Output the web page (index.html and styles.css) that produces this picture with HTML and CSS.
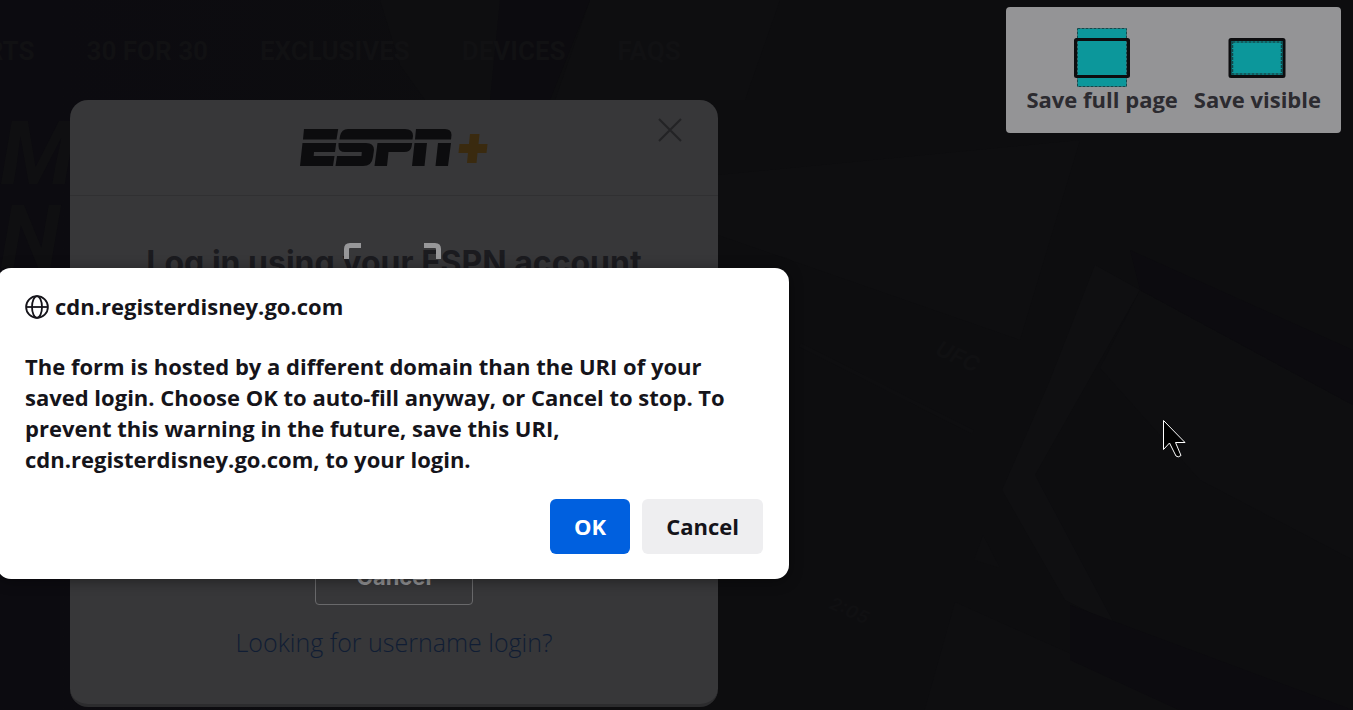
FILE: index.html
```html
<!DOCTYPE html>
<html lang="en">
<head>
<meta charset="utf-8">
<title>ESPN+ Log in</title>
<link rel="stylesheet" href="styles.css">
</head>
<body>
<div class="page">
  <svg class="art" viewBox="0 0 1353 710" preserveAspectRatio="xMinYMin slice" aria-hidden="true">
    <g fill="#0e0e10">
      <path d="M380 0H530L490 100H425L400 65Z"/>
      <path d="M590 0H780L745 100H555Z"/>
      <path d="M718 175L1080 140L1020 340L718 235Z"/>
      <path d="M1140 290L1353 405V560L1200 480L1100 368Z"/>
      <path d="M983 535L1000 568L974 560Z"/>
      <path d="M955 602L1353 780H905Z"/>
    </g>
    <path d="M1095 265L1140 290L1035 475L1115 625L1065 600L1002 490L1048 385Z" fill="#0f0f11"/>
    <g fill="#0c0b0f">
      <path d="M500 0H590L550 100H490Z"/>
      <path d="M1130 250L1353 350V405L1140 290Z"/>
      <path d="M1070 605L1353 710V790L1070 660Z"/>
    </g>
    <path d="M800 345L973 432" fill="none" stroke="#0e0e10" stroke-width="4"/>
    <g fill="#101012" class="art-text">
      <text transform="translate(934 354) rotate(25)" font-size="22">UFC</text>
      <text transform="translate(828 608) rotate(24)" font-size="18">2:05</text>
    </g>
  </svg>
  <nav class="nav" aria-label="Main">
    <a href="#sports">SPORTS</a>
    <a href="#films">30 FOR 30</a>
    <a href="#exclusives">EXCLUSIVES</a>
    <a href="#devices">DEVICES</a>
    <a href="#faqs">FAQS</a>
  </nav>
  <div class="content">
    <p class="hero">M<br>N</p>
    <section class="login" aria-labelledby="login-title">
      <header class="login-head">
        <svg class="logo" viewBox="0 0 188 38" role="img" aria-label="ESPN+">
          <g fill="#0c0c0e">
            <path d="M4 0H38.200L36.500 10.500H3Z"/>
            <path d="M2.500 14H36.200L35 23H14L13.700 27H34.500L33 37H0Z"/>
            <path d="M48 0H105Q113 0 113 7L112.500 10.500H39.500L40 7Q41.500 0 48 0Z"/>
            <path d="M38.500 14H66Q74 14 74 21L73 28Q72 37 63 37H35.500L37 27H61.500L61.800 23H45Q38.500 23 38.500 17Z"/>
            <path d="M77.500 14H112.200L111.500 18Q110.500 23 104 23H88.500L87 37H74.500Z"/>
            <path d="M116 0H145Q151.500 0 151.500 6L151 10.500H115Z"/>
            <path d="M114.500 14H127L124.500 37H112ZM138 14H151L148 37H135.500Z"/>
          </g>
          <path d="M170 5H179.500L178.500 15H187.500L186.500 24H177.500L176.500 34H167L168 24H158.500L159.500 15H169Z" fill="#3a2a0f"/>
        </svg>
        <button class="close" type="button" aria-label="Close">
          <svg viewBox="0 0 24 24"><path d="M1 1L23 23M23 1L1 23" fill="none" stroke="#232325" stroke-width="2"/></svg>
        </button>
      </header>
      <div class="login-body">
        <h1 class="login-title" id="login-title">Log in using your ESPN account</h1>
        <div class="login-actions">
          <button class="login-cancel" type="button">Cancel</button>
          <a class="login-link" href="#username">Looking for username login?</a>
        </div>
      </div>
    </section>
  </div>
  <svg class="frame" viewBox="0 0 98 98" aria-hidden="true">
    <path d="M2.500 16V6Q2.500 2.500 6 2.500H17M80 2.500H91Q94.500 2.500 94.500 6V16" fill="none" stroke="#979799" stroke-width="5"/>
  </svg>
</div>

<div class="shots">
  <button class="shot" type="button">
    <svg class="shot-icon" viewBox="0 0 60 60" aria-hidden="true">
      <rect x="5.500" y="1.500" width="49" height="58" fill="#0c979b" stroke="#14484b" stroke-dasharray="3 1"/>
      <rect x="3.500" y="12.500" width="53" height="37" rx="1" fill="none" stroke="#0d0d0f" stroke-width="3"/>
    </svg>
    Save full page
  </button>
  <button class="shot" type="button">
    <svg class="shot-icon" viewBox="0 0 60 60" aria-hidden="true">
      <rect x="3" y="12.500" width="54" height="37" rx="1" fill="#0c979b" stroke="#0d0d0f" stroke-width="3"/>
      <rect x="5.500" y="15" width="49" height="32" fill="none" stroke="#14484b" stroke-width="1.500" stroke-dasharray="3 1"/>
    </svg>
    Save visible
  </button>
</div>

<div class="dialog" role="alertdialog" aria-labelledby="dlg-title" aria-describedby="dlg-text">
  <h2 class="dialog-title" id="dlg-title">
    <svg class="globe" viewBox="0 0 24 24" aria-hidden="true">
      <g fill="none" stroke="#15141a" stroke-width="1.800"><circle cx="12" cy="12" r="10.900"/><ellipse cx="12" cy="12" rx="5" ry="10.900"/><path d="M1 12H23"/></g>
    </svg>
    cdn.registerdisney.go.com
  </h2>
  <p class="dialog-text" id="dlg-text">The form is hosted by a different domain than the URI of your saved login. Choose OK to auto-fill anyway, or Cancel to stop. To prevent this warning in the future, save this URI, cdn.registerdisney.go.com, to your login.</p>
  <div class="dialog-actions">
    <button class="btn btn-primary" type="button">OK</button>
    <button class="btn" type="button">Cancel</button>
  </div>
</div>

<svg class="cursor" viewBox="0 0 24 40" aria-hidden="true">
  <path d="M1.500 1.500V30.500L7.500 24L14 37Q16 39 19 36.500L13.500 23.500H23Z" fill="#000" stroke="#fff"/>
</svg>
</body>
</html>
```
FILE: styles.css
```css
* { box-sizing: border-box; }
body {
  margin: 0;
  min-height: 100vh;
  position: relative;
  overflow: hidden;
  background: #0d0d0f;
  font-family: "Open Sans", "Noto Sans", sans-serif;
}
button { font: inherit; border: 0; cursor: pointer; }
h1, h2, p { margin: 0; }

.page {
  position: relative;
  height: 100vh;
  overflow: hidden;
  background: linear-gradient(90deg, #0c0b10 0, #0c0b10 60px, #0d0d0f 500px);
}
.art { position: absolute; top: 0; left: 0; width: 100%; height: 100%; }
.art-text { font-family: Inter, sans-serif; font-weight: 700; font-style: italic; }

.nav {
  position: relative;
  display: flex;
  gap: 52px;
  height: 100px;
  padding-top: 2px;
  align-items: center;
  margin-left: -64px;
}
.nav a {
  color: #111113;
  font: 700 26px/32px Roboto, sans-serif;
  text-decoration: none;
  white-space: nowrap;
}

.content { position: relative; display: flex; align-items: flex-start; }
.hero {
  flex: 0 0 70px;
  min-width: 0;
  width: 70px;
  padding-top: 12px;
  color: #0f0f11;
  font: italic 700 88px/84px Roboto, sans-serif;
}

.login {
  flex: 0 1 648px;
  position: relative;
  display: flex;
  flex-direction: column;
  border-radius: 18px;
  border-bottom: 3px solid #2c2c2e;
  background: #373739;
}
.login-head {
  display: grid;
  grid-template-columns: 1fr auto 1fr;
  align-items: center;
  height: 96px;
  border-bottom: 1px solid #303032;
}
.logo { grid-column: 2; width: 188px; height: 38px; }
.close {
  justify-self: end;
  align-self: start;
  width: 24px;
  height: 24px;
  margin: 18px 36px 0 0;
  padding: 0;
  background: none;
}
.close svg { display: block; }
.login-body {
  display: flex;
  flex-direction: column;
  align-items: center;
  gap: 264px;
  padding: 45px 24px 44px;
}
.login-title { color: #1b1b1f; font: 700 32px/44px Inter, sans-serif; }
.login-actions {
  display: flex;
  flex-direction: column;
  align-items: center;
  gap: 19px;
}
.login-cancel {
  width: 158px;
  height: 56px;
  border: 1px solid #69696b;
  border-radius: 4px;
  background: none;
  color: #929294;
  font: 700 22px/32px Inter, sans-serif;
}
.login-link { color: #101d34; font: 300 25px/36px "Open Sans", sans-serif; text-decoration: none; }

.frame { position: absolute; top: 243px; left: 344px; width: 98px; height: 98px; }

.shots {
  position: absolute;
  top: 7px;
  right: 12px;
  display: flex;
  gap: 16px;
  padding: 20px 20px 22px;
  border-radius: 4px;
  background: #949496;
}
.shot {
  display: flex;
  flex-direction: column;
  align-items: center;
  padding: 0;
  background: none;
  color: #2c2b30;
  font-weight: 700;
  font-size: 22px;
  line-height: 24px;
}
.shot-icon { width: 60px; height: 60px; }

.dialog {
  position: absolute;
  top: 268px;
  left: -3px;
  width: 792px;
  padding: 23px 26px 25px 28px;
  border-radius: 14px;
  background: #fff;
  color: #15141a;
  box-shadow: 0 2px 14px rgba(0, 0, 0, 0.4);
  font-weight: 700;
  font-size: 22px;
  line-height: 31px;
}
.dialog-title {
  display: flex;
  align-items: center;
  gap: 6px;
  margin-bottom: 29px;
  font: inherit;
}
.globe { width: 24px; height: 24px; }
.dialog-actions {
  display: flex;
  justify-content: flex-end;
  gap: 12px;
  margin-top: 24px;
}
.btn {
  height: 55px;
  padding: 0 24px;
  border-radius: 6px;
  background: #eeeef0;
  color: #15141a;
}
.btn-primary { background: #0060df; color: #fff; }

.cursor { position: absolute; top: 419px; left: 1162px; width: 24px; height: 40px; }
```
